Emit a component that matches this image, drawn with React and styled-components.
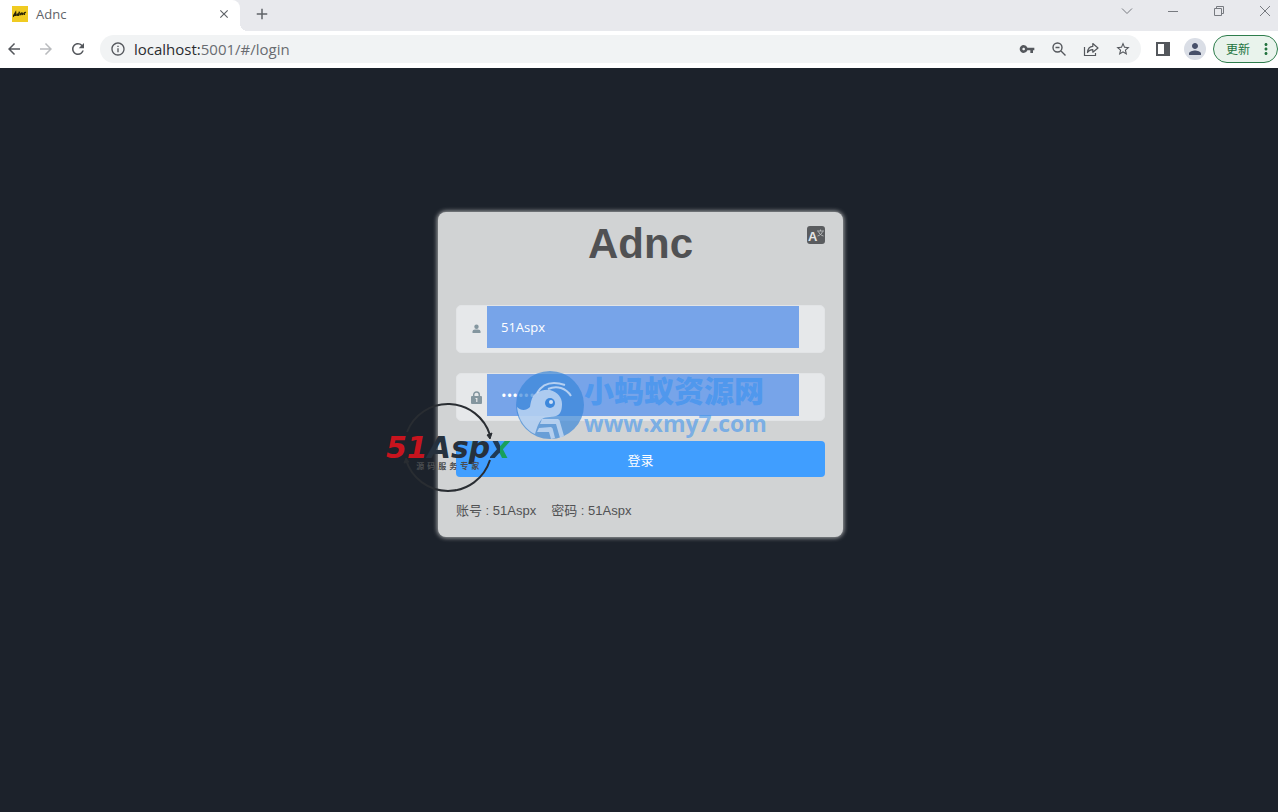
import React, { useState } from "react";
import styled, { createGlobalStyle } from "styled-components";
import {
  MdArrowBack,
  MdArrowForward,
  MdRefresh,
  MdInfoOutline,
  MdVpnKey,
  MdStarBorder,
  MdPerson,
  MdClose,
  MdAdd,
  MdMoreVert,
} from "react-icons/md";

const GlobalStyle = createGlobalStyle`
  * {
    box-sizing: border-box;
  }
  body {
    margin: 0;
    background: #1c222b;
    font-family: "Liberation Sans", "Noto Sans CJK SC", sans-serif;
  }
  button {
    padding: 0;
    border: 0;
    background: none;
    color: inherit;
    font: inherit;
  }
  svg {
    display: block;
    flex: none;
  }
`;

const Base = styled.div`
  display: flex;
  flex-direction: column;
  min-height: 100vh;
  overflow: hidden;
`;

const TabBar = styled.div`
  display: flex;
  align-items: center;
  height: 31px;
  padding-right: 7px;
  background: #e8e9ed;
  color: #5f6368;
`;

const Tab = styled.div`
  position: relative;
  display: flex;
  align-items: center;
  align-self: stretch;
  gap: 8px;
  width: 240px;
  padding: 0 9px 3px 12px;
  background: #fff;
  border-radius: 0 8px 0 0;
  &::after {
    content: "";
    position: absolute;
    left: 100%;
    bottom: 0;
    width: 8px;
    height: 8px;
    background: radial-gradient(circle at 100% 0, #e8e9ed 8px, #fff 8px);
  }
`;

const TabTitle = styled.span`
  flex: 1;
  font-family: "Open Sans", sans-serif;
  font-size: 13px;
`;

const Favicon = styled.span`
  display: flex;
  align-items: center;
  justify-content: center;
  width: 16px;
  height: 16px;
  background: #f0cb22;
`;

const NewTab = styled.button`
  margin-left: 13px;
  padding-bottom: 3px;
`;

const WindowButtons = styled.div`
  display: flex;
  gap: 34px;
  margin-left: auto;
  padding-bottom: 9px;
  color: #777a80;
`;

const Toolbar = styled.div`
  display: flex;
  align-items: center;
  height: 37px;
  padding: 0 0 2px 5px;
  background: #fff;
  color: #54575c;
`;

const NavButtons = styled.div`
  display: flex;
  gap: 14px;
  margin-right: 13px;
`;

const IconButton = styled.button`
  color: ${(props) => (props.$faded ? "#b9bbbe" : "inherit")};
`;

const AddressBar = styled.div`
  display: flex;
  flex: 1;
  align-items: center;
  gap: 8px;
  height: 28px;
  padding: 0 10px;
  border-radius: 14px;
  background: #f1f3f4;
`;

const Url = styled.span`
  flex: 1;
  color: #696c71;
  font-family: "Open Sans", sans-serif;
  font-size: 15px;
  line-height: 20px;
  b {
    color: #2a2c2f;
    font-weight: normal;
  }
`;

const AddressIcons = styled.div`
  display: flex;
  gap: 16px;
`;

const PanelButton = styled.button`
  margin: 0 13px 0 14px;
`;

const Avatar = styled.button`
  display: flex;
  align-items: center;
  justify-content: center;
  width: 22px;
  height: 22px;
  margin-right: 7px;
  border-radius: 50%;
  background: #dadee6;
  color: #47506a;
`;

const UpdateButton = styled.button`
  display: flex;
  align-items: center;
  justify-content: space-between;
  width: 65px;
  height: 28px;
  padding: 0 2px 0 12px;
  border: 1px solid #2e7d4c;
  border-radius: 14px;
  background: #e9f3ec;
  color: #23733f;
  font-family: "Noto Sans CJK SC", sans-serif;
  font-size: 12px;
`;

const Page = styled.main`
  flex: 1;
  padding: 144px 0 0 3px;
  background: #1c222b;
`;

const Card = styled.form`
  position: relative;
  width: 405px;
  margin: 0 auto;
  padding: 8px 18px 16px;
  border-radius: 8px;
  background: #d1d3d4;
  box-shadow: 0 0 4px 1px #a5a7a8;
`;

const Title = styled.h1`
  margin: 0 0 37px;
  color: #505153;
  font-size: 42px;
  line-height: 48px;
  text-align: center;
`;

const LangButton = styled.button`
  position: absolute;
  top: 14px;
  right: 18px;
`;

const Field = styled.label`
  display: flex;
  height: 48px;
  margin-bottom: 20px;
  border: 1px solid #e2e4e6;
  border-radius: 5px;
  background: #e6e8ea;
  color: #84969f;
`;

const FieldIcon = styled.span`
  display: flex;
  align-items: center;
  justify-content: flex-end;
  width: 30px;
  padding-right: ${(props) => props.$gap}px;
`;

const Input = styled.input`
  width: 85%;
  height: 42px;
  padding: 0 14px;
  border: 0;
  outline: 0;
  background: #77a4e9;
  color: #fff;
  font-family: "Open Sans", sans-serif;
  font-size: ${(props) => (props.type === "password" ? 15 : 13)}px;
`;

const LoginButton = styled.button`
  display: block;
  width: 100%;
  height: 36px;
  border-radius: 4px;
  background: #409eff;
  color: #fff;
  font-family: "Noto Sans CJK SC", sans-serif;
  font-size: 13px;
`;

const Tips = styled.div`
  display: flex;
  gap: 15px;
  margin-top: 24px;
  color: #505153;
  font-size: 13px;
  line-height: 20px;
`;

const AntMark = styled.div`
  position: absolute;
  top: 158px;
  left: 78px;
  display: flex;
  align-items: center;
  pointer-events: none;
`;

const AntText = styled.div`
  color: rgba(60, 146, 240, 0.68);
  font-family: "Noto Sans CJK SC", sans-serif;
  font-size: 30px;
  font-weight: 900;
  line-height: 36px;
  white-space: nowrap;
  div {
    color: rgba(72, 152, 236, 0.65);
    font-family: "Open Sans", sans-serif;
    font-size: 23px;
    font-weight: 700;
    line-height: 32px;
  }
`;

const AspxMark = styled.div`
  position: absolute;
  top: 190px;
  left: -52px;
  display: grid;
  justify-items: center;
  pointer-events: none;
  > * {
    grid-area: 1 / 1;
  }
`;

const AspxText = styled.div`
  padding-top: 32px;
  color: #26313d;
  font-family: "DejaVu Sans", sans-serif;
  font-size: 30px;
  font-style: italic;
  font-weight: bold;
  line-height: 28px;
`;

const Red = styled.span`
  color: #c8141e;
`;

const GreenEdge = styled.span`
  background: linear-gradient(90deg, #1f3a55 50%, #18a05c 50%);
  background-clip: text;
  color: transparent;
`;

const Slogan = styled.div`
  display: flex;
  justify-content: center;
  gap: 3px;
  color: #4a4d50;
  font-family: "Noto Sans CJK SC", sans-serif;
  font-size: 8px;
  font-style: normal;
  line-height: 8px;
`;

function Line({ size = 12, children, ...rest }) {
  return (
    <svg width={size} height={size} viewBox={`0 0 ${size} ${size}`} fill="none" stroke="currentColor" {...rest}>
      {children}
    </svg>
  );
}

function Browser() {
  return (
    <header>
      <TabBar>
        <Tab>
          <Favicon>
            <svg width="14" height="8" viewBox="0 0 14 8" fill="none" stroke="#2b2508" strokeWidth="1.5">
              <path d="M0 6.8L2.6 2.5L3 6M1.2 5.2H3M6.4 1.6L5.6 5.6M6 4C4.4 3.2 3.6 5.8 5.6 5.2M7.4 5.2L8 3M7.8 3.8C9 2.6 9.8 3 9.2 4.9M12.9 2.6C11.2 1.8 10 4.8 12 4.3" />
            </svg>
          </Favicon>
          <TabTitle>Adnc</TabTitle>
          <IconButton aria-label="Close tab"><MdClose size={14} /></IconButton>
        </Tab>
        <NewTab aria-label="New tab"><MdAdd size={18} /></NewTab>
        <WindowButtons>
          <IconButton aria-label="Search tabs"><Line><path d="M1 3.5L6 8.5L11 3.5" /></Line></IconButton>
          <IconButton aria-label="Minimize"><Line><path d="M1 6.5H11" /></Line></IconButton>
          <IconButton aria-label="Restore">
            <Line><path d="M1.5 3.5H8.5V10.5H1.5ZM3.5 3.5V1.5H10.5V8.5H8.5" /></Line>
          </IconButton>
          <IconButton aria-label="Close"><Line><path d="M1 1L11 11M11 1L1 11" /></Line></IconButton>
        </WindowButtons>
      </TabBar>
      <Toolbar>
        <NavButtons>
          <IconButton aria-label="Back"><MdArrowBack size={18} /></IconButton>
          <IconButton aria-label="Forward" $faded><MdArrowForward size={18} /></IconButton>
          <IconButton aria-label="Reload"><MdRefresh size={18} /></IconButton>
        </NavButtons>
        <AddressBar>
          <MdInfoOutline size={16} />
          <Url><b>localhost:</b>5001/#/login</Url>
          <AddressIcons>
            <IconButton aria-label="Passwords"><MdVpnKey size={16} /></IconButton>
            <IconButton aria-label="Zoom">
              <Line size={16} strokeWidth="1.4">
                <circle cx="6.5" cy="6.5" r="4.5" />
                <path d="M10 10L14.5 14.5M4.5 6.5H8.5" />
              </Line>
            </IconButton>
            <IconButton aria-label="Share">
              <Line size={16} strokeWidth="1.2">
                <path d="M1.5 6V14.5H12.5V12" />
                <path d="M4.5 11.5C4.8 7.5 6.8 5.6 9.8 5.4V2.5L15 7L9.8 11.2V8.6C7.6 8.5 5.8 9.4 4.5 11.5Z" strokeLinejoin="round" />
              </Line>
            </IconButton>
            <IconButton aria-label="Bookmark"><MdStarBorder size={16} /></IconButton>
          </AddressIcons>
        </AddressBar>
        <PanelButton aria-label="Side panel">
          <Line size={16} strokeWidth="2">
            <path d="M2 2H14V14H2Z" />
            <path d="M10 2H14V14H10Z" fill="currentColor" />
          </Line>
        </PanelButton>
        <Avatar aria-label="Profile"><MdPerson size={18} /></Avatar>
        <UpdateButton>
          更新
          <MdMoreVert size={18} />
        </UpdateButton>
      </Toolbar>
    </header>
  );
}

function AntWatermark() {
  return (
    <AntMark>
      <svg width="68" height="70" viewBox="1 0 68 70" fill="none">
        <circle cx="35" cy="35" r="34" fill="#3784d8" fillOpacity="0.68" />
        <g fill="#d3e2f6" fillOpacity="0.72">
          <path d="M2 37C6 41 11 41 15 37C16 31 17 26 21 23C27 20 31 19 35 20C43 22 47 28 47 34C47 39 46 43 43 45C38 48 31 46 27 49C23 53 22 58 20 64C12 61 3 50 2 37Z" />
          <path d="M27 49L43 49Q45 50 45 52L49 66L45 68L41 54L25 54Z" />
          <path d="M24 58L36 57Q38 58 38 60L40 68L36 69L34 62L22 62Z" />
        </g>
        <g stroke="#cfe0f6" strokeOpacity="0.8" strokeWidth="2">
          <path d="M22 23C28 13 38 11 50 15" />
          <path d="M33 19C42 15 51 18 56 26" />
        </g>
        <circle cx="35" cy="33" r="5" fill="#3d88dc" />
        <circle cx="36" cy="32" r="2" fill="#cfe0f6" />
      </svg>
      <AntText>
        小蚂蚁资源网
        <div>www.xmy7.com</div>
      </AntText>
    </AntMark>
  );
}

function AspxWatermark() {
  return (
    <AspxMark>
      <svg width="92" height="92" viewBox="0 0 92 92" fill="none" stroke="#292d32" strokeWidth="2">
        <path d="M5 30A44 44 0 0 1 88 33" />
        <path d="M4 58A44 44 0 0 0 88 58" />
        <path d="M85 33L90 31L88 37Z" fill="#292d32" strokeWidth="1" />
        <path d="M2 61L4 56L7 60Z" fill="#292d32" strokeWidth="1" />
      </svg>
      <AspxText>
        <Red>51</Red>Asp<GreenEdge>x</GreenEdge>
        <Slogan>
          {"源码服务专家".split("").map((char) => (
            <span key={char}>{char}</span>
          ))}
        </Slogan>
      </AspxText>
    </AspxMark>
  );
}

function App() {
  const [username, setUsername] = useState("51Aspx");
  const [password, setPassword] = useState("51Aspx");

  return (
    <Base>
      <GlobalStyle />
      <Browser />
      <Page>
        <Card onSubmit={(e) => e.preventDefault()}>
          <Title>Adnc</Title>
          <LangButton type="button" aria-label="Language">
            <svg width="18" height="18" viewBox="0 0 18 18">
              <rect width="18" height="18" rx="3" fill="#5a5c5f" />
              <text x="1" y="15" fill="#e4e5e6" fontSize="13" fontWeight="bold">A</text>
              <path d="M10 5H17M13.5 3.5V5M11.5 5.5C12 7.5 14 9.5 16.5 10M15.5 5.5C15 7.5 13 9.5 10.5 10" stroke="#c4c6c8" strokeWidth="0.8" fill="none" />
            </svg>
          </LangButton>
          <Field>
            <FieldIcon $gap={6}>
              <svg width="9" height="10" viewBox="0 0 9 10" fill="currentColor">
                <circle cx="4.5" cy="2.7" r="2.2" />
                <path d="M0.5 9V7.5Q0.5 5.5 3 5.5H6Q8.5 5.5 8.5 7.5V9Z" />
              </svg>
            </FieldIcon>
            <Input aria-label="账号" value={username} onChange={(e) => setUsername(e.target.value)} />
          </Field>
          <Field>
            <FieldIcon $gap={5}>
              <svg width="11" height="13" viewBox="0 0 11 13" fill="none">
                <path d="M2.7 6V3.7a2.8 2.8 0 0 1 5.6 0V6" stroke="currentColor" strokeWidth="1.5" />
                <rect y="5" width="11" height="8" rx="1" fill="currentColor" />
                <path d="M4.5 7.5H5.8V11" stroke="#e6e8ea" strokeWidth="1.2" />
              </svg>
            </FieldIcon>
            <Input type="password" aria-label="密码" value={password} onChange={(e) => setPassword(e.target.value)} />
          </Field>
          <LoginButton type="submit">登录</LoginButton>
          <Tips>
            <span>账号 : 51Aspx</span>
            <span>密码 : 51Aspx</span>
          </Tips>
          <AntWatermark />
          <AspxWatermark />
        </Card>
      </Page>
    </Base>
  );
}

export default App;
